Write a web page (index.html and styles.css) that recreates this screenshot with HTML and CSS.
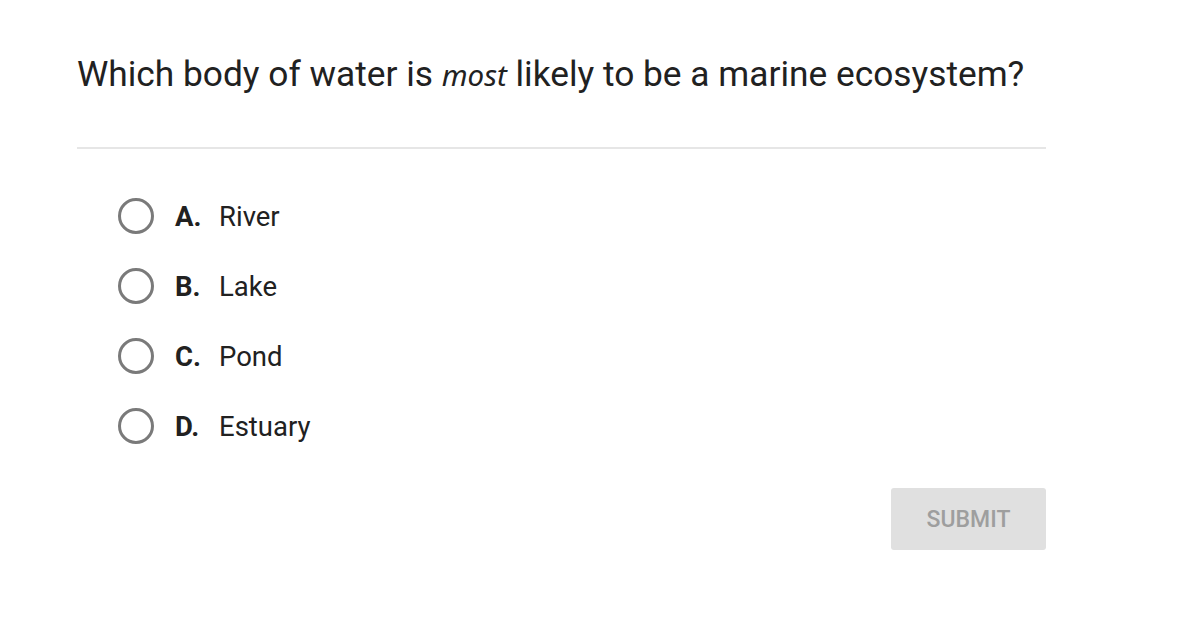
FILE: index.html
```html
<!DOCTYPE html>
<html>
<head>
<meta charset="utf-8">
<link rel="stylesheet" href="styles.css">
</head>
<body>
<div class="quiz">
  <h1 class="question">Which body of water is <em>most</em> likely to be a marine ecosystem?</h1>
  <hr class="divider">
  <ul class="options">
    <li class="option"><span class="radio"></span><span class="letter">A.</span><span class="text">River</span></li>
    <li class="option"><span class="radio"></span><span class="letter">B.</span><span class="text">Lake</span></li>
    <li class="option"><span class="radio"></span><span class="letter">C.</span><span class="text">Pond</span></li>
    <li class="option"><span class="radio"></span><span class="letter">D.</span><span class="text">Estuary</span></li>
  </ul>
  <div class="actions">
    <button class="submit">SUBMIT</button>
  </div>
</div>
</body>
</html>
```
FILE: styles.css
```css
html, body {
  margin: 0;
  padding: 0;
  background: #ffffff;
}
body {
  font-family: Roboto, "Liberation Sans", sans-serif;
  color: #212121;
}
.quiz {
  width: 969px;
  margin-left: 77px;
  padding-top: 50px;
}
.question {
  margin: 0;
  font-size: 35.3px;
  font-weight: 400;
  line-height: 48px;
  color: #212121;
}
.question em {
  font-family: "Noto Sans", "Open Sans", sans-serif;
  font-style: italic;
  font-size: 29.5px;
  line-height: 1;
}
.divider {
  margin: 49px 0 0 0;
  border: 0;
  height: 2px;
  background: #e6e6e6;
}
.options {
  list-style: none;
  margin: 0;
  padding: 0 0 0 41px;
  margin-top: 32px;
}
.option {
  display: flex;
  align-items: center;
  height: 70px;
  font-size: 27.5px;
}
.radio {
  width: 30px;
  height: 30px;
  border: 3px solid #7a7a7a;
  border-radius: 50%;
  box-sizing: content-box;
  flex: none;
}
.letter {
  font-weight: 700;
  margin-left: 21px;
  width: 44px;
}
.text {
  color: #212121;
}
.actions {
  display: flex;
  justify-content: flex-end;
  margin-top: 27px;
}
.submit {
  width: 155px;
  height: 62px;
  border: 0;
  border-radius: 3px;
  background: #e0e0e0;
  color: #9e9e9e;
  font-family: Roboto, "Liberation Sans", sans-serif;
  font-size: 23px;
  font-weight: 500;
  padding: 0;
}
```
